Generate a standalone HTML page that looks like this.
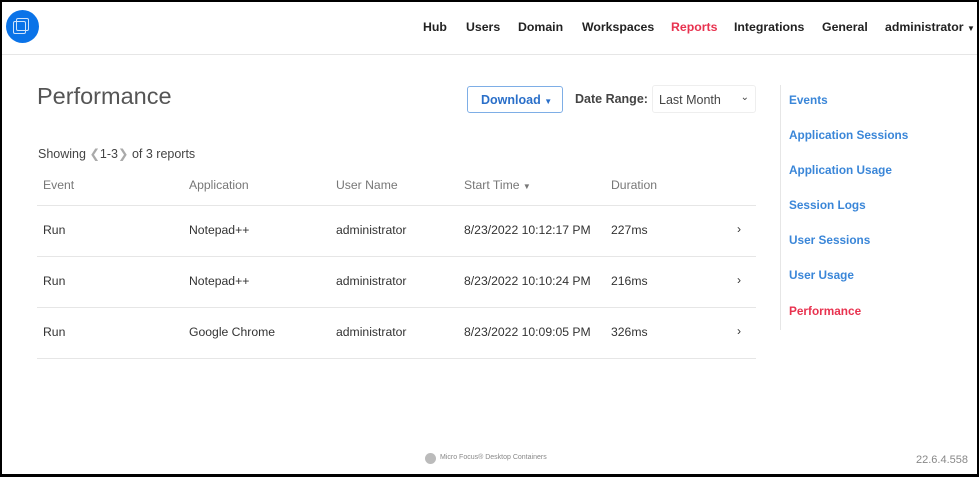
<!DOCTYPE html>
<html><head><style>
*{margin:0;padding:0;box-sizing:border-box}
body{width:979px;height:477px;overflow:hidden;font-family:"Liberation Sans",sans-serif;background:#fff;position:relative;color:#444}
.frame{position:absolute;left:0;top:0;width:979px;height:477px;border:2px solid #000;border-bottom-width:3px;border-right-width:2px}
.a{position:absolute;white-space:nowrap}
.nav{top:20px;font-size:12.3px;font-weight:bold;color:#222}
.hr{position:absolute;height:1px;background:#e6e6e6}
.th{top:178px;font-size:12.2px;color:#777}
.td{font-size:12.2px;color:#333}
.side{left:789px;font-size:11.8px;font-weight:bold;color:#3a86d8}
</style></head><body>
<div class="a" style="left:6px;top:10px;width:33px;height:33px;border-radius:50%;background:#0a73e8"></div>
<div class="a" style="left:16px;top:18px;width:13px;height:13px;border:1.5px solid #cfe3fb;border-radius:2px"></div>
<div class="a" style="left:13px;top:21px;width:13px;height:13px;border:1.5px solid #cfe3fb;border-radius:2px"></div>
<div class="a nav" style="left:423px">Hub</div>
<div class="a nav" style="left:466px">Users</div>
<div class="a nav" style="left:518px">Domain</div>
<div class="a nav" style="left:582px">Workspaces</div>
<div class="a nav" style="left:671px;color:#e8324f">Reports</div>
<div class="a nav" style="left:734px">Integrations</div>
<div class="a nav" style="left:822px">General</div>
<div class="a nav" style="left:885px">administrator <span style="font-size:8px">▼</span></div>
<div class="hr" style="left:2px;top:54px;width:975px"></div>
<div class="a" style="left:37px;top:83px;font-size:23.5px;color:#555">Performance</div>
<div class="a" style="left:467px;top:86px;width:96px;height:27px;border:1px solid #7eaee6;border-radius:3px;color:#2a6fc9;font-size:12.5px;font-weight:bold;padding:6px 0 0 13px">Download <span style="font-size:8px">▼</span></div>
<div class="a" style="left:575px;top:92px;font-size:12.5px;font-weight:bold;color:#444">Date Range:</div>
<div class="a" style="left:652px;top:85px;width:104px;height:28px;border:1px solid #eee;border-radius:3px;font-size:12.5px;color:#444;padding:7px 0 0 6px">Last Month<span style="position:absolute;right:6px;top:6px;font-size:10px">⌄</span></div>
<div class="a" style="left:38px;top:146px;font-size:12.5px;color:#444">Showing <span style="color:#aaa">❮</span>1-3<span style="color:#aaa">❯</span> of 3 reports</div>
<div class="a th" style="left:43px">Event</div>
<div class="a th" style="left:189px">Application</div>
<div class="a th" style="left:336px">User Name</div>
<div class="a th" style="left:464px">Start Time <span style="font-size:8px">▼</span></div>
<div class="a th" style="left:611px">Duration</div>
<div class="hr" style="left:37px;top:205px;width:719px"></div>
<div class="hr" style="left:37px;top:256px;width:719px"></div>
<div class="hr" style="left:37px;top:307px;width:719px"></div>
<div class="hr" style="left:37px;top:358px;width:719px"></div>
<div class="a td" style="left:43px;top:223px">Run</div><div class="a td" style="left:189px;top:223px">Notepad++</div><div class="a td" style="left:336px;top:223px">administrator</div><div class="a td" style="left:464px;top:223px">8/23/2022 10:12:17 PM</div><div class="a td" style="left:611px;top:223px">227ms</div><div class="a td" style="left:737px;top:222px">›</div>
<div class="a td" style="left:43px;top:274px">Run</div><div class="a td" style="left:189px;top:274px">Notepad++</div><div class="a td" style="left:336px;top:274px">administrator</div><div class="a td" style="left:464px;top:274px">8/23/2022 10:10:24 PM</div><div class="a td" style="left:611px;top:274px">216ms</div><div class="a td" style="left:737px;top:273px">›</div>
<div class="a td" style="left:43px;top:325px">Run</div><div class="a td" style="left:189px;top:325px">Google Chrome</div><div class="a td" style="left:336px;top:325px">administrator</div><div class="a td" style="left:464px;top:325px">8/23/2022 10:09:05 PM</div><div class="a td" style="left:611px;top:325px">326ms</div><div class="a td" style="left:737px;top:324px">›</div>
<div class="a" style="left:780px;top:85px;width:1px;height:245px;background:#e6e6e6"></div>
<div class="a side" style="top:93px">Events</div>
<div class="a side" style="top:128px">Application Sessions</div>
<div class="a side" style="top:163px">Application Usage</div>
<div class="a side" style="top:198px">Session Logs</div>
<div class="a side" style="top:233px">User Sessions</div>
<div class="a side" style="top:268px">User Usage</div>
<div class="a side" style="top:304px;color:#e8324f">Performance</div>
<div class="a" style="left:425px;top:453px;width:11px;height:11px;border-radius:50%;background:#bbb"></div>
<div class="a" style="left:440px;top:454px;font-size:7px;color:#888">Micro Focus® Desktop Containers</div>
<div class="a" style="left:916px;top:454px;font-size:11px;color:#888">22.6.4.558</div>
<div class="frame"></div>
</body></html>
